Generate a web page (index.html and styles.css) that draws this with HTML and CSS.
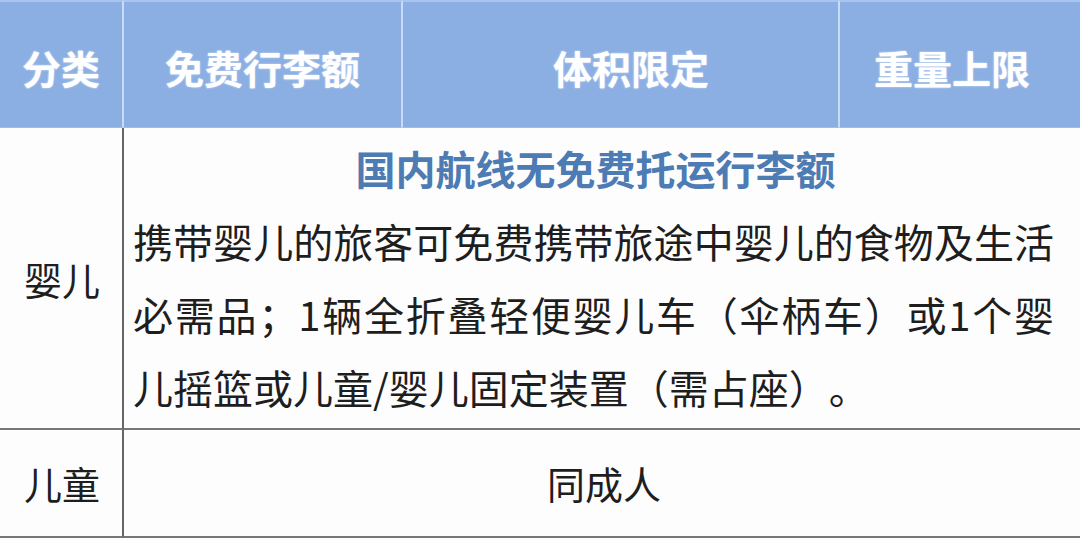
FILE: index.html
```html
<!DOCTYPE html>
<html lang="zh-CN">
<head>
<meta charset="utf-8">
<title>婴儿与儿童行李额</title>
<link rel="stylesheet" href="styles.css">
</head>
<body>
<div class="tbl">
  <div class="th th-first">分类</div>
  <div class="th">免费行李额</div>
  <div class="th th-vol">体积限定</div>
  <div class="th th-last th-wt">重量上限</div>

  <div class="cat cat-infant">婴儿</div>
  <div class="detail">
    <div class="title">国内航线无免费托运行李额</div>
    <div class="line just">携带婴儿的旅客可免费携带旅途中婴儿的食物及生活</div>
    <div class="line just">必需品；1辆全折叠轻便婴儿车（伞柄车）或1个婴</div>
    <div class="line">儿摇篮或儿童/婴儿固定装置（需占座）。</div>
  </div>

  <div class="cat cat-child">儿童</div>
  <div class="same">同成人</div>
</div>
</body>
</html>
```

FILE: styles.css
```css
html, body {
  margin: 0;
  padding: 0;
  background: #fdfdfe;
}
body {
  width: 1080px;
  height: 542px;
  overflow: hidden;
  font-family: "Noto Sans CJK SC", "Noto Sans", sans-serif;
  color: #1e1e1e;
  text-spacing-trim: space-all;
}
.tbl {
  display: grid;
  grid-template-columns: 124px 279px 437px 1fr;
  grid-template-rows: 128px 302px 108px;
}
.th {
  background: #8bafe3;
  border-top: 2px solid #a9c5ee;
  border-bottom: 1px solid #9fbdea;
  border-right: 2px solid #c9dbf6;
  color: #ffffff;
  font-weight: 700;
  font-size: 39px;
  display: flex;
  align-items: center;
  justify-content: center;
  padding-top: 5px;
  text-shadow: 0 0 2px rgba(255,255,255,0.7);
}
.th-vol {
  justify-content: flex-start;
  padding-left: 150px;
}
.th-wt {
  justify-content: flex-start;
  padding-left: 34px;
}
.th-last {
  border-right: none;
}
.cat {
  border-right: 2px solid #666;
  border-bottom: 2px solid #777;
  font-size: 38px;
  display: flex;
  align-items: center;
  justify-content: center;
  padding-left: 2px;
}
.cat-child {
  padding-bottom: 2px;
}
.detail {
  grid-column: 2 / 5;
  border-bottom: 2px solid #777;
  padding: 4px 26px 0 9px;
  font-size: 40px;
  line-height: 73px;
}
.line {
  white-space: nowrap;
}
.title {
  color: #4d7bb3;
  font-weight: 700;
  text-align: center;
  padding-left: 4px;
}
.just {
  text-align: justify;
  text-align-last: justify;
}
.same {
  grid-column: 2 / 5;
  border-bottom: 2px solid #777;
  font-size: 38px;
  display: flex;
  align-items: center;
  justify-content: center;
  padding-left: 4px;
  padding-bottom: 2px;
}
```
